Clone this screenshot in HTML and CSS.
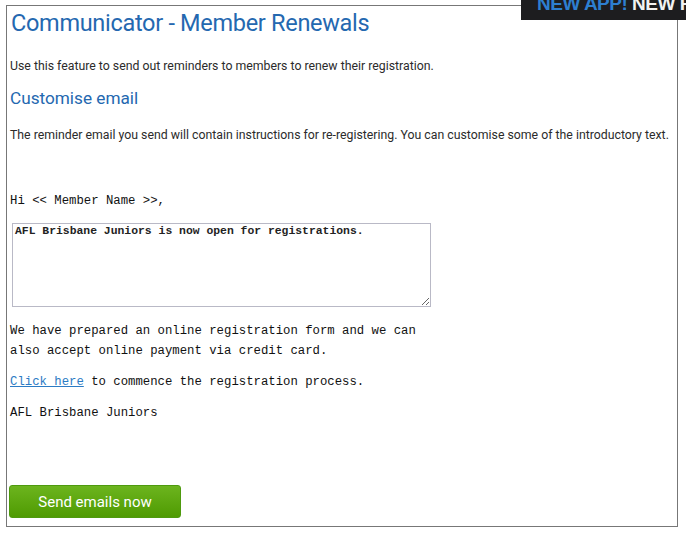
FILE: index.html
```html
<!DOCTYPE html>
<html>
<head>
<meta charset="utf-8">
<link rel="stylesheet" href="styles.css">
</head>
<body>
<div class="banner"><span class="blue">NEW APP!</span> NEW F</div>
<div class="frame">
  <h1 class="title">Communicator - Member Renewals</h1>
  <p class="intro">Use this feature to send out reminders to members to renew their registration.</p>
  <h2 class="subtitle">Customise email</h2>
  <p class="intro desc">The reminder email you send will contain instructions for re-registering. You can customise some of the introductory text.</p>
  <div class="email">
    <p class="greet">Hi &lt;&lt; Member Name &gt;&gt;,</p>
    <textarea class="box">AFL Brisbane Juniors is now open for registrations.</textarea>
    <p class="para">We have prepared an online registration form and we can<br>also accept online payment via credit card.</p>
    <p class="para"><a class="link" href="#">Click here</a> to commence the registration process.</p>
    <p class="para">AFL Brisbane Juniors</p>
  </div>
  <button class="send">Send emails now</button>
</div>
</body>
</html>
```
FILE: styles.css
```css
html, body {
  margin: 0;
  padding: 0;
  background: #fff;
}
body {
  width: 686px;
  height: 534px;
  position: relative;
  overflow: hidden;
  font-family: Roboto, "Liberation Sans", sans-serif;
}
.banner {
  position: absolute;
  left: 521px;
  top: 0;
  width: 170px;
  height: 20px;
  background: #1d1d1f;
  color: #f2f2f2;
  font-family: "Liberation Sans", sans-serif;
  font-weight: bold;
  font-size: 19px;
  line-height: 8px;
  padding-left: 16px;
  box-sizing: border-box;
  overflow: hidden;
  white-space: nowrap;
  letter-spacing: -0.5px;
}
.banner .blue {
  color: #2d7fd0;
}
.frame {
  margin: 5px 0 0 6px;
  width: 672px;
  height: 522px;
  box-sizing: border-box;
  border: 1px solid #777;
  padding: 0 3px;
  display: flex;
  flex-direction: column;
  align-items: flex-start;
}
.title {
  margin: 3px 0 0 1px;
  font-size: 23.5px;
  line-height: 28px;
  font-weight: 400;
  color: #2468b0;
  letter-spacing: -0.3px;
}
.intro {
  margin: 22px 0 0 0;
  font-size: 12.3px;
  line-height: 14px;
  color: #2b2b2b;
}
.subtitle {
  margin: 14px 0 0 0;
  font-size: 17.2px;
  line-height: 22px;
  font-weight: 400;
  color: #2468b0;
}
.desc {
  margin-top: 19px;
}
.email {
  margin-top: 50px;
  font-family: "Liberation Mono", monospace;
  font-size: 12.3px;
  color: #111;
}
.greet {
  margin: 0;
  line-height: 18px;
}
.box {
  display: block;
  margin: 13px 0 0 2px;
  width: 419px;
  height: 84px;
  box-sizing: border-box;
  border: 1px solid #b9b9c6;
  padding: 0 2px;
  font-family: "Liberation Mono", monospace;
  font-size: 11.4px;
  font-weight: bold;
  line-height: 14px;
  color: #222;
  resize: both;
}
.para {
  margin: 14px 0 0;
  line-height: 20px;
}
.para + .para {
  margin-top: 11px;
}
.link {
  color: #2c7bc4;
  text-decoration: underline;
}
.send {
  margin: auto 0 8px -1px;
  width: 172px;
  height: 33px;
  border: 1px solid #4e9a0e;
  border-radius: 3px;
  background: linear-gradient(#6cb41e, #4f9b02);
  color: #fff;
  font-family: Roboto, "Liberation Sans", sans-serif;
  font-size: 15px;
  padding: 0;
}
```
